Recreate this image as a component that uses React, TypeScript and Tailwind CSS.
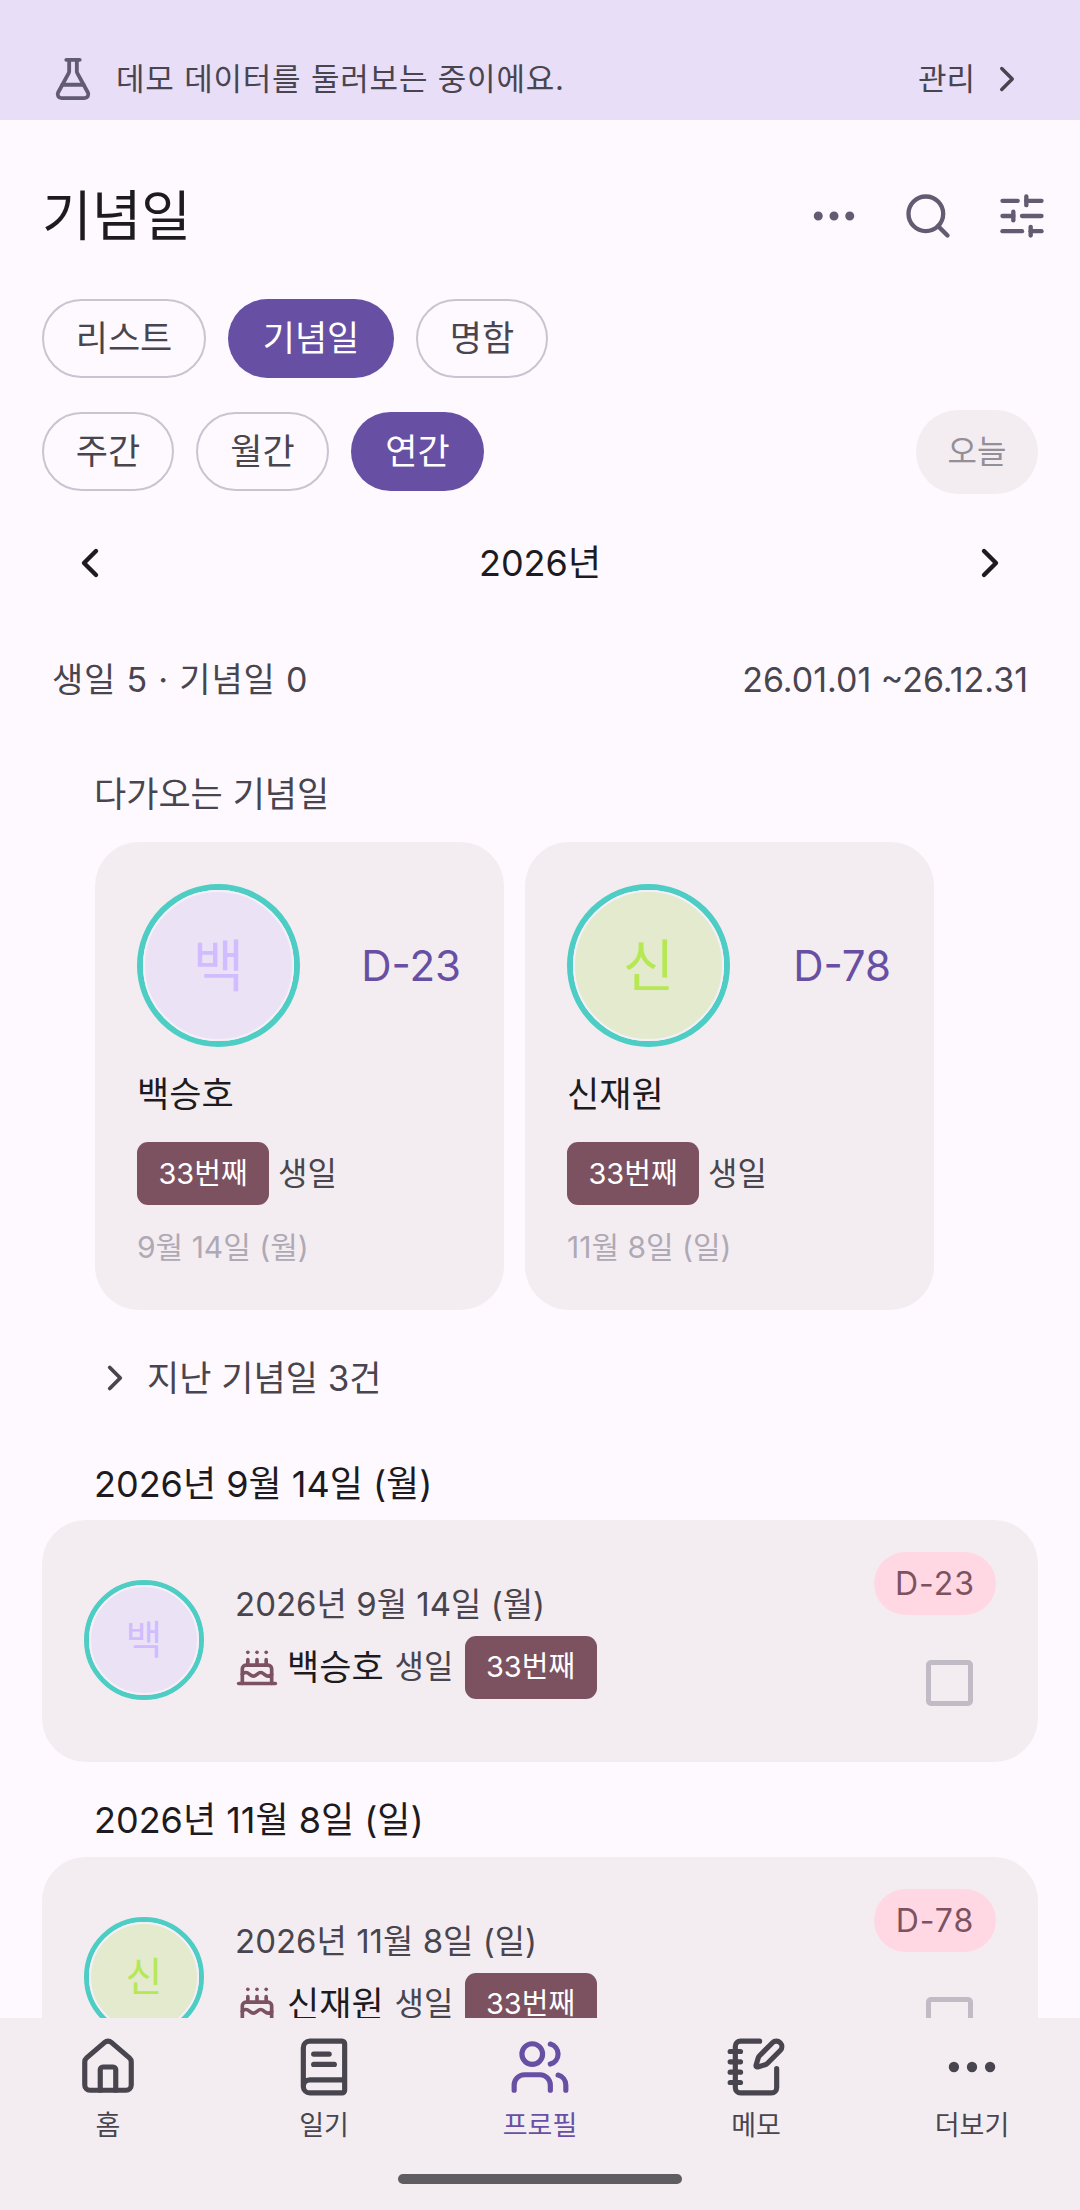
import { Cake, ChevronLeft, ChevronRight, Ellipsis, FlaskConical, House, BookText, NotebookPen, Search, SlidersHorizontal, Users } from 'lucide-react';

const upcoming = [
  { initial: '백', name: '백승호', dDay: 'D-23', date: '9월 14일 (월)', bg: 'bg-[#EBE3F5]', fg: 'text-[#D0BCFF]' },
  { initial: '신', name: '신재원', dDay: 'D-78', date: '11월 8일 (일)', bg: 'bg-[#E3EACD]', fg: 'text-[#B5E853]' },
];

const events = [
  { initial: '백', name: '백승호', dDay: 'D-23', heading: '2026년 9월 14일 (월)', bg: 'bg-[#EBE3F5]', fg: 'text-[#D0BCFF]' },
  { initial: '신', name: '신재원', dDay: 'D-78', heading: '2026년 11월 8일 (일)', bg: 'bg-[#E3EACD]', fg: 'text-[#B5E853]' },
];

const tabs = [
  { label: '홈', icon: House },
  { label: '일기', icon: BookText },
  { label: '프로필', icon: Users, active: true },
  { label: '메모', icon: NotebookPen },
  { label: '더보기', icon: Ellipsis },
];

function Chip({ label, active, className }: { label: string; active?: boolean; className: string }) {
  return (
    <span
      className={`flex h-[79px] items-center justify-center rounded-full text-[35px] ${className} ${
        active ? 'bg-[#6750A4] text-white' : 'border-[2.5px] border-[#CAC4D0] text-[#49454F]'
      }`}
    >
      {label}
    </span>
  );
}

function Avatar({ initial, bg, fg, big }: { initial: string; bg: string; fg: string; big?: boolean }) {
  return (
    <div
      className={`flex shrink-0 rounded-full border-[#4ECDC4] ${
        big ? 'h-[163px] w-[163px] border-[6px]' : 'mb-[2px] h-[120px] w-[120px] border-[5px]'
      }`}
    >
      <div className={`flex flex-1 items-center justify-center rounded-full border-2 border-[#F5EFF7] ${bg} ${fg} ${big ? 'text-[56px]' : 'text-[40px]'}`}>
        {initial}
      </div>
    </div>
  );
}

function CountBadge() {
  return (
    <span className="flex h-[63px] w-[132px] shrink-0 items-center justify-center rounded-[11px] bg-[#7D5260] text-[29px] text-white">
      33번째
    </span>
  );
}

export default function App() {
  return (
    <div className="flex h-[2210px] w-[1080px] flex-col overflow-hidden bg-[#FDF9FF] font-['Inter','Noto_Sans_CJK_KR',sans-serif] text-[#1D1B20]">
      <div className="flex h-[120px] shrink-0 items-center bg-[#E8DEF8] pl-[50px] pr-[52px] pt-[38px] text-[#49454F]">
        <FlaskConical size={46} strokeWidth={2} className="text-[#625B71]" />
        <span className="ml-[20px] text-[31px] tracking-[0.8px]">데모 데이터를 둘러보는 중이에요.</span>
        <span className="ml-auto text-[31px]">관리</span>
        <ChevronRight size={42} strokeWidth={2} className="ml-[11px]" />
      </div>

      <div className="min-h-0 flex-1 overflow-hidden">
        <div className="mt-[32px] flex h-[128px] items-center pl-[42px] pr-[32px]">
          <h1 className="text-[54px] font-normal">기념일</h1>
          <div className="ml-auto flex items-center text-[#625B71]">
            <Ellipsis size={54} strokeWidth={2} />
            <Search size={52} strokeWidth={2} className="ml-[41px]" />
            <SlidersHorizontal size={52} strokeWidth={2} className="ml-[42px]" />
          </div>
        </div>

        <div className="mt-[19px] flex gap-[22px] pl-[42px]">
          <Chip label="리스트" className="w-[164px]" />
          <Chip label="기념일" active className="w-[166px]" />
          <Chip label="명함" className="w-[132px]" />
        </div>

        <div className="mt-[32px] flex h-[84px] items-center gap-[22px] px-[42px]">
          <Chip label="주간" className="-mt-[2px] w-[132px]" />
          <Chip label="월간" className="-mt-[2px] w-[133px]" />
          <Chip label="연간" active className="-mt-[2px] w-[133px]" />
          <span className="ml-auto flex h-[84px] w-[122px] items-center justify-center rounded-full bg-[#F3EDF1] text-[32px] text-[#938F99]">
            오늘
          </span>
        </div>

        <div className="flex h-[138px] items-center justify-between px-[66px]">
          <ChevronLeft size={48} strokeWidth={2.2} />
          <span className="text-[36px]">2026년</span>
          <ChevronRight size={48} strokeWidth={2.2} />
        </div>

        <div className="mt-[27px] flex h-[40px] items-center justify-between px-[52px] text-[34px] text-[#49454F]">
          <span className="tracking-[0.8px]">생일 5 · 기념일 0</span>
          <span>26.01.01 ~26.12.31</span>
        </div>

        <h2 className="mt-[73px] pl-[94px] text-[35px] font-normal leading-[44px] text-[#49454F]">다가오는 기념일</h2>

        <div className="mt-[26px] flex gap-[21px] pl-[95px]">
          {upcoming.map((item) => (
            <div key={item.name} className="h-[468px] w-[409px] rounded-[44px] bg-[#F3EDF1] pl-[42px] pr-[43px] pt-[42px]">
              <div className="flex items-center justify-between">
                <Avatar initial={item.initial} bg={item.bg} fg={item.fg} big />
                <span className="text-[42px] text-[#6750A4]">{item.dDay}</span>
              </div>
              <div className="mt-[25px] text-[35px] leading-[44px]">{item.name}</div>
              <div className="mt-[26px] flex items-center gap-[9px]">
                <CountBadge />
                <span className="text-[32px] text-[#49454F]">생일</span>
              </div>
              <div className="mt-[24px] text-[30px] leading-[36px] text-[#AFA9B5]">{item.date}</div>
            </div>
          ))}
        </div>

        <div className="mt-[48px] flex h-[40px] items-center pl-[94px] text-[35px] text-[#49454F]">
          <ChevronRight size={42} strokeWidth={2.2} />
          <span className="ml-[11px]">지난 기념일 3건</span>
        </div>

        {events.map((item, i) => (
          <div key={item.name}>
            <h3 className={`${i === 0 ? 'mt-[64px]' : 'mt-[36px]'} ${i === 0 ? 'mb-[14px]' : 'mb-[15px]'} pl-[94px] text-[36px] font-normal leading-[44px]`}>{item.heading}</h3>
            <div className="mx-[42px] flex h-[242px] items-center rounded-[44px] bg-[#F3EDF1] pl-[42px] pr-[42px]">
              <Avatar initial={item.initial} bg={item.bg} fg={item.fg} />
              <div className="ml-[31px]">
                <div className="text-[33px] leading-[40px] text-[#49454F]">{item.heading}</div>
                <div className="mt-[12px] flex items-center">
                  <Cake size={44} strokeWidth={2} className="text-[#7D5260]" />
                  <span className="ml-[8px] text-[35px]">{item.name}</span>
                  <span className="ml-[11px] text-[32px] text-[#49454F]">생일</span>
                  <span className="ml-[11px]"><CountBadge /></span>
                </div>
              </div>
              <div className="ml-auto flex flex-col items-end self-start pt-[32px]">
                <span className="flex h-[63px] w-[122px] items-center justify-center rounded-full bg-[#FFD8E4] text-[32px] tracking-[1px] text-[#7D5260]">
                  {item.dDay}
                </span>
                <span className="mr-[23px] mt-[45px] h-[46px] w-[47px] rounded-[5px] border-[5px] border-[#C1BBC6]" />
              </div>
            </div>
          </div>
        ))}
      </div>

      <div className="flex h-[192px] shrink-0 flex-col bg-[#F3EDF1]">
        <div className="flex">
          {tabs.map(({ label, icon: Icon, active }) => (
            <div key={label} className={`flex h-[146px] flex-1 flex-col items-center pt-[18px] ${active ? 'text-[#6750A4]' : 'text-[#49454F]'}`}>
              <Icon size={62} strokeWidth={2} />
              <span className="mt-[10px] text-[27px] leading-[36px]">{label}</span>
            </div>
          ))}
        </div>
        <div className="mx-auto mt-[10px] h-[10px] w-[284px] rounded-full bg-[#605D62]" />
      </div>
    </div>
  );
}
